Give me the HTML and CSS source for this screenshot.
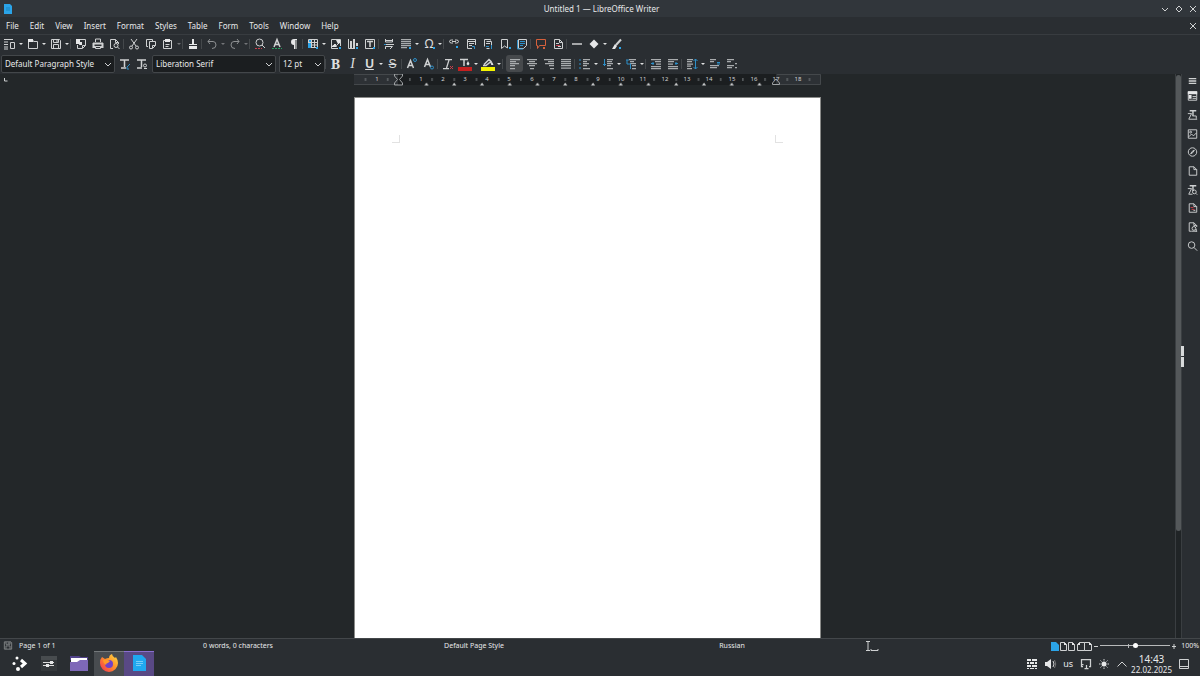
FILE: index.html
```html
<!DOCTYPE html>
<html lang="en">
<head>
<meta charset="utf-8">
<title>Untitled 1 — LibreOffice Writer</title>
<link rel="stylesheet" href="styles.css">
</head>
<body>
<header class="titlebar">
  <svg class="app-icon" viewBox="0 0 10 12"><path class="blue" d="M1 1h6l2 2v8H1z"/><path d="M3 5h4M3 7h4" stroke="#1884c0"/></svg>
  <h1 class="title">Untitled 1 — LibreOffice Writer</h1>
  <div class="window-buttons">
    <button aria-label="Minimize"><svg viewBox="0 0 14 14"><path d="M4 6l3 3 3-3"/></svg></button>
    <button aria-label="Maximize"><svg viewBox="0 0 14 14"><path d="M7 4l3 3-3 3-3-3z"/></svg></button>
    <button aria-label="Close"><svg viewBox="0 0 14 14"><path d="M4 4l6 6M10 4l-6 6"/></svg></button>
  </div>
</header>

<nav class="menubar" aria-label="Menu">
  <button>File</button><button>Edit</button><button>View</button><button>Insert</button><button>Format</button><button>Styles</button><button>Table</button><button>Form</button><button>Tools</button><button>Window</button><button>Help</button>
  <button class="close-doc" aria-label="Close document"><svg viewBox="0 0 14 14"><path d="M4 4l6 6M10 4l-6 6"/></svg></button>
</nav>

<div class="toolbar standard" role="toolbar" aria-label="Standard">
  <button class="tool" aria-label="New"><svg viewBox="0 0 16 16"><path d="M2 3.500h9M2 6h4M2 8.500h4M2 11h4M2 13h4M8.500 6.500h4v6h-4z"/></svg></button>
  <button class="drop" aria-label="New options"></button>
  <button class="tool" aria-label="Open"><svg viewBox="0 0 16 16"><path d="M3.500 12.500v-9h4l1 2h4v7z"/><path class="solid" d="M3 3h5v3H3z"/></svg></button>
  <button class="drop" aria-label="Open options"></button>
  <button class="tool" aria-label="Save"><svg viewBox="0 0 16 16"><path d="M3.500 3.500h8l1 1v8h-9zM5.500 3.500v3h5v-3M5.500 12.500v-4h5v4M9 4v2"/></svg></button>
  <button class="drop" aria-label="Save options"></button>
  <i class="sep"></i>
  <button class="tool" aria-label="Export as PDF"><svg viewBox="0 0 16 16"><path d="M4.500 9v3.500h5l3-3v-6h-9M9.500 12v-2.500h3"/><path class="solid" d="M3 3h4v5H3zM7 6h2v3H6z"/></svg></button>
  <button class="tool" aria-label="Print"><svg viewBox="0 0 16 16"><path d="M5.500 6v-3h5v3M5.500 10.500h5v2h-5z"/><path d="M3 7.500h10M3.500 7v4h2M12.500 7v4h-2" stroke-width="2"/></svg></button>
  <button class="tool" aria-label="Print preview"><svg viewBox="0 0 16 16"><path d="M6 12.500H3.500v-9h5l3 3V8M8.500 3.500v3h3"/><circle cx="9" cy="9.500" r="2"/><path d="M10.500 11l2 2"/></svg></button>
  <i class="sep"></i>
  <button class="tool" aria-label="Cut"><svg viewBox="0 0 16 16"><path d="M5 3l5 7M11 3l-5 7"/><circle cx="5" cy="11.500" r="1.500"/><circle cx="11" cy="11.500" r="1.500"/></svg></button>
  <button class="tool" aria-label="Copy"><svg viewBox="0 0 16 16"><path d="M5 10.500H3.500v-7h6V5M6.500 5.500h6v4l-3 3h-3zM9.500 12v-2.500h3"/></svg></button>
  <button class="tool" aria-label="Paste"><svg viewBox="0 0 16 16"><path d="M3.500 4.500h8v8h-8zM5.500 8.500h4M5.500 10.500h3"/><path class="solid" d="M5 3h5v3H5z"/></svg></button>
  <button class="drop dim" aria-label="Paste options"></button>
  <i class="sep"></i>
  <button class="tool" aria-label="Clone formatting"><svg viewBox="0 0 16 16"><path class="solid" d="M7 3h2v5h3v1H4V8h3zM4 10h8v3H4z"/></svg></button>
  <i class="sep"></i>
  <button class="tool dim" aria-label="Undo"><svg viewBox="0 0 16 16"><path d="M6 3L4 5.500 6 8M4 5.500h5q3 0 3 3.500t-4 3.500"/></svg></button>
  <button class="drop dim" aria-label="Undo options"></button>
  <button class="tool dim" aria-label="Redo"><svg viewBox="0 0 16 16"><path d="M10 3l2 2.500L10 8M12 5.500H7q-3 0-3 3.500t4 3.500"/></svg></button>
  <button class="drop dim" aria-label="Redo options"></button>
  <i class="sep"></i>
  <button class="tool" aria-label="Find and replace"><svg viewBox="0 0 16 16"><circle cx="7.500" cy="6.500" r="3.500"/><path d="M10 9l3 3"/><path class="s-red" d="M3 12.500h7" stroke-dasharray="2 1"/></svg></button>
  <button class="tool" aria-label="Spelling"><svg viewBox="0 0 16 16"><path d="M5 11l3-7.500L11 11M6 8.500h4" stroke-width="1.500"/><path class="s-green" d="M3 12.500h10" stroke-dasharray="2 1"/></svg></button>
  <button class="tool" aria-label="Formatting marks"><svg viewBox="0 0 16 16"><path class="solid" d="M11 3v1h-.5v9h-1V4H9v9H8V9Q5 9 5 6t3-3z"/></svg></button>
  <i class="sep"></i>
  <button class="tool" aria-label="Insert table"><svg viewBox="0 0 16 16"><path d="M3.500 3.500h9v8h-9zM3.500 6.500h9M3.500 9h9M6.500 3.500v8M9.500 3.500v8"/><path class="blue" d="M4 4h2v2H4zM3 7h3v5H3zM11 11h2v2h-2z"/></svg></button>
  <button class="drop" aria-label="Table options"></button>
  <button class="tool" aria-label="Insert image"><svg viewBox="0 0 16 16"><path d="M10 12.500H3.500v-9h9V10M4 11l3-3 1.500 1.500L12 6"/><path class="solid" d="M8 4h4v3l-2 1zM4 10l3-2 2 3H4z"/><path class="blue" d="M11 11h2v2h-2z"/></svg></button>
  <button class="tool" aria-label="Insert chart"><svg viewBox="0 0 16 16"><path d="M3.500 3v9.500H10"/><path d="M6 5v7M9 3v9M12 7v3" stroke-width="2"/><path class="blue" d="M11 11h2v2h-2z"/></svg></button>
  <button class="tool" aria-label="Insert text box"><svg viewBox="0 0 16 16"><path d="M3.500 3.500h9v9h-9z"/><path d="M5 5.500h6M8 5v6" stroke-width="1.500"/><path class="blue" d="M11 11h2v2h-2z"/></svg></button>
  <i class="sep"></i>
  <button class="tool" aria-label="Page break"><svg viewBox="0 0 16 16"><path d="M4.500 3v3h7V3M5 4.500h6M5 8.500h8M4.500 13v-2.500h7L9 13"/><path class="s-blue" d="M3 8.500h2"/></svg></button>
  <button class="tool" aria-label="Insert field"><svg viewBox="0 0 16 16"><path class="lines" d="M3 3.500h10M3 5.500h10M3 7.500h10M3 9.500h10M3 11.500h6"/><path class="blue" d="M11 11h2v2h-2z"/></svg></button>
  <button class="drop" aria-label="Field options"></button>
  <button class="tool" aria-label="Special character"><svg viewBox="0 0 16 16"><text class="omega" x="8" y="12">Ω</text><path class="blue" d="M12 11h2v2h-2z"/></svg></button>
  <button class="drop" aria-label="Character options"></button>
  <i class="sep"></i>
  <button class="tool" aria-label="Insert hyperlink"><svg viewBox="0 0 16 16"><path d="M7 4H5.500q-2 0-2 1.500T5.500 7H7M9 4h1.500q2 0 2 1.500T10.500 7H9M6 5.500h4"/><path class="blue" d="M10 10h2v2h-2z"/></svg></button>
  <button class="tool" aria-label="Insert footnote"><svg viewBox="0 0 16 16"><path d="M9 12.500H4.500v-9h8V9M4 5.500h8M6 7.500h5M6 9.500h3"/><path class="s-blue" d="M9 10.500h2.500V13"/></svg></button>
  <button class="tool" aria-label="Insert endnote"><svg viewBox="0 0 16 16"><path d="M4.500 10.500v-7h6v1M6.500 5.500h5v4M6.500 12.500h3M6 7.500h4"/><path class="s-blue" d="M6 10.500h3M11.500 9v4"/></svg></button>
  <button class="tool" aria-label="Insert bookmark"><svg viewBox="0 0 16 16"><path d="M4.500 12.500v-9h6V12L7.500 10z"/><path class="blue" d="M12 11h2v2h-2z"/></svg></button>
  <button class="tool" aria-label="Cross-reference"><svg viewBox="0 0 16 16"><path d="M4.500 3.500h8v6l-3 3h-5z"/><path class="s-blue" d="M3.500 4v9H9M6 5.500h5M6 7.500h5M6 9.500h3"/></svg></button>
  <i class="sep"></i>
  <button class="tool" aria-label="Insert comment"><svg viewBox="0 0 16 16"><path class="s-orange" d="M3.500 3.500h9v6h-6l-2 3v-3h-1z"/><path class="s-orange" d="M10 12h2" stroke-width="2"/></svg></button>
  <button class="tool" aria-label="Track changes"><svg viewBox="0 0 16 16"><path d="M4.500 3.500h5l3 3v6h-8zM9.500 3.500v3h3M6 7.500h3M8 10.500h3"/><path class="s-red" d="M6 9.500h4"/></svg></button>
  <i class="sep"></i>
  <button class="tool" aria-label="Insert line"><svg viewBox="0 0 16 16"><path d="M3 8h10" stroke-width="1.500"/></svg></button>
  <button class="tool" aria-label="Basic shapes"><svg viewBox="0 0 16 16"><path class="solid" d="M8 3.500l4.500 4.500L8 12.500 3.500 8z"/></svg></button>
  <button class="drop" aria-label="Shape options"></button>
  <button class="tool" aria-label="Show draw functions"><svg viewBox="0 0 16 16"><path d="M12 3.500L7 9" stroke-width="2"/><path class="solid" d="M6 8l2 2-2 3H3z"/><path class="blue" d="M10 11h2v2h-2z"/></svg></button>
</div>

<div class="toolbar formatting" role="toolbar" aria-label="Formatting">
  <label class="combo style"><select aria-label="Paragraph style"><option>Default Paragraph Style</option></select><svg viewBox="0 0 8 8"><path d="M1 3l3 3 3-3"/></svg></label>
  <div class="pair">
  <button class="tool" aria-label="Update style"><svg viewBox="0 0 16 16"><path d="M3 4h9M7.500 4v7M4 12h5" stroke-width="1.500"/><path class="s-blue" d="M13 8l-3 3v2h2"/></svg></button>
  <button class="tool" aria-label="New style"><svg viewBox="0 0 16 16"><path d="M3 4h9M7.500 4v7M3 12h5" stroke-width="1.500"/><circle cx="11" cy="9.500" r="1.500"/><path d="M10 12.500h3"/></svg></button>
  </div>
  <label class="combo font"><select aria-label="Font name"><option>Liberation Serif</option></select><svg viewBox="0 0 8 8"><path d="M1 3l3 3 3-3"/></svg></label>
  <label class="combo size"><select aria-label="Font size"><option>12 pt</option></select><svg viewBox="0 0 8 8"><path d="M1 3l3 3 3-3"/></svg></label>
  <i class="sep"></i>
  <button class="tool glyph bold">B</button>
  <button class="tool glyph italic">I</button>
  <button class="tool glyph under">U</button>
  <button class="drop" aria-label="Underline options"></button>
  <button class="tool glyph strike">S</button>
  <i class="sep"></i>
  <button class="tool" aria-label="Superscript"><svg viewBox="0 0 16 16"><path d="M3.500 12l3-7.500 3 7.500M4.500 9.500h4" stroke-width="1.500"/><circle class="s-blue" cx="11" cy="4" r="1.500"/></svg></button>
  <button class="tool" aria-label="Subscript"><svg viewBox="0 0 16 16"><path d="M3.500 11l3-7.500 3 7.500M4.500 8.500h4" stroke-width="1.500"/><circle class="s-blue" cx="11" cy="11.500" r="1.500"/></svg></button>
  <i class="sep"></i>
  <button class="tool" aria-label="Clear formatting"><svg viewBox="0 0 16 16"><path d="M5 3.500h7M9 4l-2.500 8M3 12.500h6" stroke-width="1.250"/><path class="s-red" d="M10 10l3 3M13 10l-3 3"/></svg></button>
  <button class="tool" aria-label="Font color"><svg viewBox="0 0 16 16"><path d="M3 3.500h8M7 4v6" stroke-width="1.500"/><path class="solid" d="M11 5l1.500 3-1.500 1.500L9.500 8z"/><path fill="#c62020" stroke="none" d="M1 11h14v4H1z"/></svg></button>
  <button class="drop" aria-label="Font color options"></button>
  <button class="tool" aria-label="Highlighting color"><svg viewBox="0 0 16 16"><path d="M3 9.500h3l5-4-2-2-5 5M10 5l2 3" stroke-width="1.500"/><path class="solid" d="M12 6l1.500 3H11z"/><path fill="#f4f400" stroke="none" d="M1 11h14v4H1z"/></svg></button>
  <button class="drop" aria-label="Highlight options"></button>
  <i class="sep wide"></i>
  <button class="tool active" aria-label="Align left"><svg viewBox="0 0 16 16"><path class="lines" d="M3 3.500h10M3 5.500h6M3 7.500h9M3 9.500h5M3 12.500h5"/></svg></button>
  <button class="tool" aria-label="Align center"><svg viewBox="0 0 16 16"><path class="lines" d="M3 3.500h10M5 5.500h6M3 7.500h10M5 9.500h6M6 12.500h4"/></svg></button>
  <button class="tool" aria-label="Align right"><svg viewBox="0 0 16 16"><path class="lines" d="M3 3.500h10M7 5.500h6M4 7.500h9M8 9.500h5M9 12.500h4"/></svg></button>
  <button class="tool" aria-label="Justify"><svg viewBox="0 0 16 16"><path class="lines" d="M3 3.500h10M3 5.500h10M3 7.500h10M3 9.500h10M3 12h10"/></svg></button>
  <i class="sep"></i>
  <button class="tool" aria-label="Bullet list"><svg viewBox="0 0 16 16"><path class="lines" d="M6 3.500h7M6 5.500h4M6 7.500h6M6 9.500h4M6 12.500h7"/><path class="s-blue" d="M2 4h2M2 8h2M2 12h2"/></svg></button>
  <button class="drop" aria-label="Bullet options"></button>
  <button class="tool" aria-label="Numbered list"><svg viewBox="0 0 16 16"><path class="lines" d="M7 3.500h6M7 5.500h5M7 7.500h6M7 9.500h4M7 12.500h6"/><path class="s-blue" d="M4.500 3v7M3 8.500h3"/></svg></button>
  <button class="drop" aria-label="Number options"></button>
  <button class="tool" aria-label="Outline"><svg viewBox="0 0 16 16"><path class="lines" d="M6 3.500h7M7 5.500h4M7 7.500h6M9 9.500h4M9 12.500h4"/><path class="s-blue" d="M3 4h3M4 4v4h4M7.500 8v5"/></svg></button>
  <button class="drop" aria-label="Outline options"></button>
  <i class="sep"></i>
  <button class="tool" aria-label="Increase indent"><svg viewBox="0 0 16 16"><path class="lines" d="M3 3.500h10M7 5.500h6M8 8h5M3 10.500h10M3 12.500h10"/><path class="s-blue" d="M3 7.500h3M5 6v3"/></svg></button>
  <button class="tool" aria-label="Decrease indent"><svg viewBox="0 0 16 16"><path class="lines" d="M3 3.500h10M3 5.500h6M3 8h5M3 10.500h10M3 12.500h10"/><path class="s-blue" d="M10 7.500h3M11 6v3"/></svg></button>
  <i class="sep"></i>
  <button class="tool" aria-label="Line spacing"><svg viewBox="0 0 16 16"><path class="lines" d="M3 3.500h6M3 5.500h5M3 8h6M3 10h4M3 12.500h5"/><path class="s-blue" d="M11.500 3v10M9.500 5l2-2 2 2M9.500 11l2 2 2-2"/></svg></button>
  <button class="drop" aria-label="Spacing options"></button>
  <button class="tool" aria-label="Increase paragraph spacing"><svg viewBox="0 0 16 16"><path class="lines" d="M3 3.500h6M3 5.500h4M3 9.500h9M3 11.500h7"/><path class="s-blue" d="M10 6.500h3M10 8h3"/></svg></button>
  <button class="tool" aria-label="Decrease paragraph spacing"><svg viewBox="0 0 16 16"><path class="lines" d="M3 3.500h7M3 5.500h4M3 9.500h7M3 11.500h5M11 7.500h2M11 11.500h2"/></svg></button>
</div>

<main class="workspace">
  <section class="canvas">
    <svg class="tab-type" viewBox="0 0 6 6"><path d="M1.500 1v3h3" /></svg>
    <svg class="ruler" viewBox="0 0 467 13">
      <defs>
        <pattern id="half" x="0" y="0" width="22.2" height="13" patternUnits="userSpaceOnUse"><path d="M11.500 4v3" stroke="#777c80"/></pattern>
        <pattern id="tabs" x="58.500" y="0" width="27.750" height="13" patternUnits="userSpaceOnUse"><path d="M12 11.500l2-3 2 3z" fill="#c8cacb" stroke="none"/></pattern>
      </defs>
      <rect x="0" y="0" width="467" height="11" fill="#2d3135" stroke="none"/>
      <path d="M0 .5h44M0 10.500h44M423 .5h43.500v10H423" stroke="#44484b"/>
      <rect x="44" y="0" width="378" height="11" fill="#1b1e20" stroke="none"/>
      <rect x="0" y="0" width="467" height="13" fill="url(#half)" stroke="none"/>
      <rect x="58.500" y="0" width="360" height="13" fill="url(#tabs)" stroke="none"/>
      <g class="nums">
        <text x="23" y="7">1</text><text x="67" y="7">1</text><text x="89" y="7">2</text><text x="111" y="7">3</text><text x="133" y="7">4</text><text x="155" y="7">5</text><text x="178" y="7">6</text><text x="200" y="7">7</text><text x="222" y="7">8</text><text x="244" y="7">9</text><text x="267" y="7">10</text><text x="289" y="7">11</text><text x="311" y="7">12</text><text x="333" y="7">13</text><text x="355" y="7">14</text><text x="378" y="7">15</text><text x="400" y="7">16</text><text x="422" y="7">17</text><text x="444" y="7">18</text>
      </g>
      <path d="M40.500 0h8v2l-3 3.500 3 3.500v2h-8V9l3-3.500-3-3.500zM418.500 10.500V9l3.500-4 3.500 4v1.500z" stroke="#a0a3a5"/>
    </svg>
    <article class="page" contenteditable="true" aria-label="Document page">
      <div class="margins"><i class="corner left"></i><i class="corner right"></i></div>
    </article>
  </section>
  <div class="scrollbar"><div class="thumb"></div></div>
  <aside class="sidebar">
    <button class="side menu" aria-label="Sidebar settings"><svg viewBox="0 0 16 16"><path d="M4 5.500h8M4 8h8M4 10.500h8" stroke-width="1.500"/></svg></button>
    <div class="decks">
      <button class="side" aria-label="Properties"><svg viewBox="0 0 16 16"><path d="M3.500 3.500h9v9h-9zM8 8.500h4M8 10.500h4"/><path class="solid" d="M3 3h10v3H3zM4 7h3v4H4z"/></svg></button>
      <button class="side" aria-label="Styles"><svg viewBox="0 0 16 16"><path d="M5 3.500h7M8.500 4v5" stroke-width="1.500"/><path d="M3 6.500h4l-3 6h9M8 9h4v3"/></svg></button>
      <button class="side" aria-label="Gallery"><svg viewBox="0 0 16 16"><path d="M3.500 3.500h9v9h-9zM4 11l3-3 2 2 3-3"/><circle cx="6" cy="6" r="1"/></svg></button>
      <button class="side" aria-label="Navigator"><svg viewBox="0 0 16 16"><circle cx="8" cy="8" r="4.500"/><path d="M10 6L8.500 8.500 6 10l1.500-2.500z"/></svg></button>
      <button class="side" aria-label="Page"><svg viewBox="0 0 16 16"><path d="M4.500 3.500h5l3 3v6h-8zM9.500 3.500v3h3"/></svg></button>
      <button class="side" aria-label="Style inspector"><svg viewBox="0 0 16 16"><path d="M5 3.500h7M8.500 4v5" stroke-width="1.500"/><path d="M3 6.500h4l-3 6h4"/><circle cx="10" cy="10" r="2"/><path d="M11.500 11.500l1.500 1.500"/></svg></button>
      <button class="side" aria-label="Manage changes"><svg viewBox="0 0 16 16"><path d="M4.500 3.500h5l3 3v6h-8zM9.500 3.500v3h3M9 10.500h2"/><path class="s-red" d="M6 7.500h3M7 9.500h3"/></svg></button>
      <button class="side" aria-label="Accessibility check"><svg viewBox="0 0 16 16"><path d="M7 12.500H4.500v-9h5l3 3V8M9.500 3.500v3h3"/><circle cx="9.500" cy="9.500" r="2"/><path d="M7 12.500h6M12 10v3"/></svg></button>
      <button class="side" aria-label="Find"><svg viewBox="0 0 16 16"><circle cx="7" cy="7" r="3.500"/><path d="M9.500 9.500l3.500 3.500"/></svg></button>
    </div>
    <div class="grip"><i></i><i></i></div>
  </aside>
</main>

<footer class="statusbar">
  <div class="cell page-no"><svg viewBox="0 0 16 16"><path d="M3.500 3.500h8l1 1v8h-9zM5.500 3.500v3h5v-3M5.500 12.500v-4h5v4M9 4v2"/></svg><span>Page 1 of 1</span></div>
  <div class="cell words">0 words, 0 characters</div>
  <div class="cell">Default Page Style</div>
  <div class="cell">Russian</div>
  <div class="cell cursor"><svg viewBox="0 0 16 12"><path d="M2 1.500h4M4 2v8M2 10.500h4M7 9v1.500h7V9"/></svg></div>
  <div class="view">
    <button aria-label="Single page"><svg viewBox="0 0 9 12"><path class="blue" d="M1 2h5l3 3v6H1z"/></svg></button>
    <button aria-label="Multiple pages"><svg viewBox="0 0 17 12"><path d="M1.500 2.500h4l2 2v6h-6zM9.500 2.500h4l2 2v6h-6z"/><path class="solid" d="M5 2l3 3H5zM13 2l3 3h-3z"/></svg></button>
    <button aria-label="Book view"><svg viewBox="0 0 17 12"><path d="M8.500 10.500h-7v-6l2-2h5zM8.500 2.500h5l2 2v6h-7z"/><path class="solid" d="M1 5l3-3v3zM13 2l3 3h-3z"/></svg></button>
    <button class="zoom-step" aria-label="Zoom out"><svg viewBox="0 0 6 12"><path d="M1 6.500h4"/></svg></button>
    <input class="zoom" type="range" min="0" max="100" value="50" aria-label="Zoom">
    <button class="zoom-step" aria-label="Zoom in"><svg viewBox="0 0 6 12"><path d="M1 6.500h4M3 4v5"/></svg></button>
    <span class="percent">100%</span>
  </div>
</footer>

<footer class="taskbar">
  <div class="tasks">
    <button class="task" aria-label="Application launcher"><svg viewBox="0 0 24 24"><path d="M14 8l4 3.500-4 3.500" stroke="#fff" stroke-width="3"/><g fill="#fff" stroke="none"><circle cx="10" cy="6" r="1.500"/><circle cx="7" cy="11.500" r="1.500"/><circle cx="11" cy="17" r="2"/></g></svg></button>
    <button class="task" aria-label="System settings"><svg viewBox="0 0 24 24"><path fill="#34383b" stroke="none" d="M4 4h16v15H4z"/><path fill="#484c4f" stroke="none" d="M4 4h16v4H4z"/><path d="M6 10.500h11M6 13.500h11" stroke="#ddd"/><path class="solid" d="M13 9h3v3h-3zM9 12h3v3H9z"/></svg></button>
    <button class="task" aria-label="Files"><svg viewBox="0 0 24 24"><path fill="#51428a" stroke="none" d="M3 4h9l2 1h7v3H3z"/><path fill="#fff" stroke="none" d="M4 6h16v5H4z"/><path fill="#7e68b8" stroke="none" d="M3 10h7l3-2h8v11H3z"/></svg></button>
    <button class="task open" aria-label="Firefox"><svg viewBox="0 0 24 24"><defs><linearGradient id="fox" x1="1" y1="0" x2="0" y2="1"><stop offset="0" stop-color="#ffe34a"/><stop offset=".45" stop-color="#ff9328"/><stop offset="1" stop-color="#f22b57"/></linearGradient></defs><path fill="url(#fox)" stroke="none" d="M5 5l3 2q2-1 4-1 0-3 3-4 0 2 3 4l1-1q2 3 2 6a9 9 0 0 1-18 0q0-4 2-6z"/><circle cx="12" cy="12" r="4" fill="#7042c8" stroke="none"/><path fill="#ff9a28" stroke="none" d="M6 8q4-1 7 1l-2 2q-2 0-2 2-3-2-3-5z"/></svg></button>
    <button class="task current" aria-label="LibreOffice Writer"><svg viewBox="0 0 24 24"><path fill="#1fa8f0" stroke="none" d="M6 3h9l4 4v12H6z"/><path d="M9 9.500h7M9 11.500h7M9 13.500h5" stroke="#78cdf8"/></svg></button>
  </div>
  <div class="tray">
    <button aria-label="Firewall"><svg viewBox="0 0 16 16"><path class="solid" d="M3 3h4v2H3zM8 3h5v2H8zM3 6h2v2H3zM6 6h4v2H6zM11 6h2v2h-2zM3 9h4v2H3zM8 9h5v2H8zM3 12h2v1H3zM6 12h4v1H6zM11 12h2v1h-2z"/></svg></button>
    <button aria-label="Volume"><svg viewBox="0 0 16 16"><path class="solid" d="M3 6h2l4-3v10l-4-3H3z"/><path d="M11 5q2 3 0 6"/><path d="M12.500 4q2.500 4 0 8" stroke="#777"/></svg></button>
    <button class="layout">us</button>
    <button aria-label="Network"><svg viewBox="0 0 16 16"><path d="M5 10.500H3.500v-7h9v7H11M3.500 8.500h2M6.500 12.500h4M8.500 12V9" stroke-width="1.250"/></svg></button>
    <button aria-label="Brightness"><svg viewBox="0 0 16 16"><circle class="solid" cx="8" cy="8" r="2.500"/><path d="M8 3v1.500M8 11.500V13M3 8h1.500M11.500 8H13M4.500 4.500l1 1M10.500 10.500l1 1M4.500 11.500l1-1M10.500 5.500l1-1"/></svg></button>
    <button aria-label="Show hidden icons"><svg viewBox="0 0 16 16"><path d="M3.500 10.500L8 6l4.500 4.500"/></svg></button>
    <div class="clock"><time>14:43</time><time class="date">22.02.2025</time></div>
    <button class="desktop" aria-label="Show desktop"><svg viewBox="0 0 16 16"><path d="M3.500 3.500h9v9h-9zM3.500 10.500h9"/></svg></button>
  </div>
</footer>
</body>
</html>
```
FILE: styles.css
```css
* { box-sizing: border-box; }
html, body { height: 100%; }
body {
  margin: 0;
  display: flex;
  flex-direction: column;
  overflow: hidden;
  background: #2a2e32;
  color: #e8e9ea;
  font: 7px/10px "Noto Sans", sans-serif;
}
button {
  margin: 0; padding: 0; border: 0;
  background: none; color: inherit; font: inherit;
  display: flex; align-items: center; justify-content: center;
}
svg { display: block; fill: none; stroke: #cfd1d2; stroke-width: 1; }
.solid { fill: #e6e7e8; stroke: none; }
.blue { fill: #2ba4e8; stroke: none; }
.s-blue { stroke: #2d8fc8; }
.s-red { stroke: #c8404c; }
.s-green { stroke: #27a060; }
.s-orange { stroke: #d4603c; }
.lines { stroke: #a9acae; stroke-width: 1.25; }
.omega { fill: #e0e1e2; stroke: none; font-size: 12px; text-anchor: middle; }

.titlebar {
  display: grid;
  grid-template-columns: 1fr auto 1fr;
  align-items: center;
  height: 17px;
  padding: 0 0 0 3px;
  background: #31363b;
  flex: none;
}
.app-icon { width: 10px; height: 12px; }
.title { margin: 0; font-size: 8px; font-weight: 400; }
.window-buttons { display: flex; justify-content: flex-end; }
.window-buttons svg, .close-doc svg { width: 14px; height: 14px; }

.menubar {
  display: flex;
  align-items: center;
  gap: 11px;
  height: 18px;
  padding-left: 6px;
  border-bottom: 1px solid #383c40;
  font-size: 8px;
  flex: none;
}
.close-doc { margin-left: auto; }

.toolbar { display: flex; align-items: center; padding-left: 1px; flex: none; }
.standard { height: 18px; }
.formatting { height: 21px; }
.tool { width: 17px; height: 17px; flex: none; }
.tool svg, .side svg { width: 16px; height: 16px; }
.tool.dim svg { opacity: .6; }
.tool.active { background: #46494c; border-radius: 3px; }
.drop { width: 6px; height: 16px; flex: none; }
.drop::after {
  content: "";
  border: 2px solid transparent;
  border-top-color: #e0e1e2;
  border-bottom: 0;
}
.drop.dim { opacity: .4; }
.sep { width: 2px; height: 10px; border-left: 1px solid #44484b; flex: none; }
.sep.wide { width: 4px; }
.glyph { font: 700 14px/16px "Noto Serif", "DejaVu Serif", "Liberation Serif", serif; color: #dcdddd; }
.italic { font-style: italic; font-weight: 400; font-family: "Liberation Serif", serif; }
.under { font: 700 12px/14px "Liberation Sans", sans-serif; text-decoration: underline; }
.strike { font: 400 12px/14px "Liberation Sans", sans-serif; text-decoration: line-through; }

.combo {
  display: flex;
  align-items: center;
  height: 18px;
  padding-right: 2px;
  border: 1px solid #43474a;
  border-radius: 2px;
  background: #1b1e20;
  flex: none;
}
.combo select {
  flex: 1;
  min-width: 0;
  padding: 0 0 0 3px;
  border: 0;
  appearance: none;
  background: none;
  color: inherit;
  font: 8px/12px "Noto Sans", sans-serif;
}
.combo svg { width: 8px; height: 8px; flex: none; }
.combo.style { width: 114px; }
.combo.font { width: 124px; margin-right: 3px; }
.combo.size { width: 46px; }
.pair { display: flex; padding: 0 2px 0 1px; }

.workspace { display: flex; flex: 1; min-height: 0; }
.canvas {
  flex: 1;
  min-width: 0;
  display: grid;
  grid-template-columns: 1fr 467px 1fr;
  grid-template-rows: 23px 1fr;
  background: #232729;
}
.tab-type { width: 6px; height: 6px; margin: 3px; }
.ruler { width: 100%; height: 13px; }
.nums { fill: #d0d2d3; stroke: none; font-size: 6px; text-anchor: middle; }
.page {
  grid-column: 2;
  grid-row: 2;
  padding: 37px;
  background: #fff;
  border: 1px solid #8a8b89;
  border-bottom: 0;
  color: #000;
  outline: 0;
}
.margins { display: flex; justify-content: space-between; }
.corner { width: 8px; height: 8px; border: solid #e2e2e2; border-width: 0 0 1px; }
.corner.left { border-right-width: 1px; }
.corner.right { border-left-width: 1px; }
.scrollbar { width: 7px; padding: 1px 0 0; border: solid #3a3e41; border-width: 0 1px; background: #202426; }
.thumb { height: 81%; border-radius: 3px; background: #54585a; }
.sidebar { position: relative; width: 18px; padding: 0 0 0 3px; }
.side { width: 15px; height: 100%; }
.side.menu { height: 13px; }
.decks { display: grid; grid-auto-rows: 1fr; height: 168px; }
.grip { position: absolute; left: -1px; top: 50%; transform: translateY(-10px); display: grid; gap: 1px; }
.grip i { width: 3px; height: 10px; background: #d8dadb; }

.statusbar {
  display: grid;
  grid-template-columns: 10% 19% 21% 22% 1fr auto;
  align-items: center;
  height: 13px;
  border-top: 1px solid #43474a;
  flex: none;
}
.cell { text-align: center; }
.words { padding-left: 8px; }
.page-no { display: flex; align-items: center; gap: 3px; }
.page-no svg { width: 16px; height: 13px; opacity: .6; }
.cursor svg { width: 16px; height: 12px; }
.view { display: flex; align-items: center; padding-right: 1px; }
.view button { flex: none; }
.view button svg { height: 12px; }
.zoom-step svg { width: 6px; }
.zoom {
  width: 70px;
  height: 8px;
  margin: 0 1px;
  appearance: none;
  background: linear-gradient(#b8babb, #b8babb) center / 100% 1px no-repeat, linear-gradient(#b8babb, #b8babb) 40% 50% / 1px 4px no-repeat;
}
.zoom::-webkit-slider-thumb { appearance: none; width: 5px; height: 5px; border-radius: 50%; background: #fff; }
.percent { margin-left: 4px; }

.taskbar { display: flex; justify-content: space-between; height: 25px; padding: 0 7px 0 4px; flex: none; }
.tasks, .tray { display: flex; align-items: center; }
.task { width: 30px; height: 100%; }
.task svg { width: 24px; height: 24px; }
.open { background: #484c50; border-top: 1px solid #74787b; }
.current { background: #594985; border-top: 1px solid #8a6fd0; }
.tray button { width: 18px; height: 100%; }
.tray svg { width: 16px; height: 16px; }
.tray .layout { font-size: 9px; }
.clock { display: grid; margin: 0 3px 0 0; text-align: center; font-size: 10px; line-height: 11px; }
.date { font-size: 8px; line-height: 9px; }
```
